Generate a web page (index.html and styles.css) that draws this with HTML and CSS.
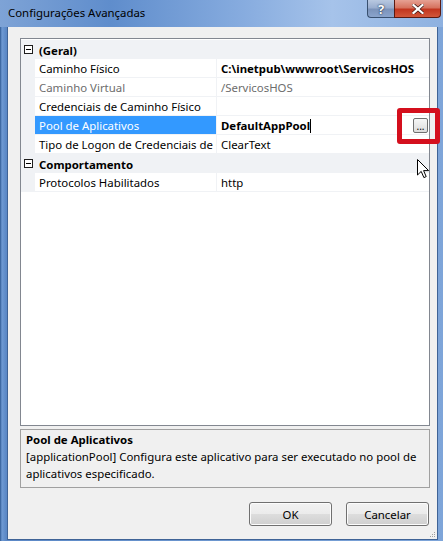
FILE: index.html
```html
<!DOCTYPE html>
<html lang="pt-BR">
<head>
    <meta charset="UTF-8">
    <title>Configurações Avançadas</title>
    <link rel="stylesheet" href="styles.css">
</head>
<body>
    <div class="window">
        <div class="titlebar">
            <span class="title">Configurações Avançadas</span>
            <div class="caption-buttons">
                <div class="cap-btn help">?</div>
                <div class="cap-btn close">
                    <svg width="12" height="10" viewBox="0 0 12 10">
                        <path d="M1.5 1 L10.5 9 M10.5 1 L1.5 9" stroke="#3a1410" stroke-width="3.6" stroke-linecap="square"/>
                        <path d="M1.5 1 L10.5 9 M10.5 1 L1.5 9" stroke="#fff" stroke-width="2.2" stroke-linecap="square"/>
                    </svg>
                </div>
            </div>
        </div>

        <div class="client">
            <div class="grid">
                <div class="row category">
                    <span class="toggle">
                        <svg width="9" height="9" viewBox="0 0 9 9">
                            <rect x="0.5" y="0.5" width="8" height="8" fill="#fff" stroke="#1e1e1e"/>
                            <path d="M2 4.5 H7" stroke="#000"/>
                        </svg>
                    </span>
                    <span class="cat-name">(Geral)</span>
                </div>
                <div class="row">
                    <span class="gutter"></span>
                    <span class="name">Caminho Físico</span>
                    <span class="value bold">C:\inetpub\wwwroot\ServicosHOS</span>
                </div>
                <div class="row readonly">
                    <span class="gutter"></span>
                    <span class="name">Caminho Virtual</span>
                    <span class="value">/ServicosHOS</span>
                </div>
                <div class="row">
                    <span class="gutter"></span>
                    <span class="name">Credenciais de Caminho Físico</span>
                    <span class="value"></span>
                </div>
                <div class="row selected">
                    <span class="gutter"></span>
                    <span class="name">Pool de Aplicativos</span>
                    <span class="value bold">
                        <span class="caret">DefaultAppPool</span>
                        <span class="browse">...</span>
                    </span>
                </div>
                <div class="row">
                    <span class="gutter"></span>
                    <span class="name">Tipo de Logon de Credenciais de Caminho Físico</span>
                    <span class="value">ClearText</span>
                </div>
                <div class="row category">
                    <span class="toggle">
                        <svg width="9" height="9" viewBox="0 0 9 9">
                            <rect x="0.5" y="0.5" width="8" height="8" fill="#fff" stroke="#1e1e1e"/>
                            <path d="M2 4.5 H7" stroke="#000"/>
                        </svg>
                    </span>
                    <span class="cat-name">Comportamento</span>
                </div>
                <div class="row">
                    <span class="gutter"></span>
                    <span class="name">Protocolos Habilitados</span>
                    <span class="value">http</span>
                </div>
            </div>

            <div class="desc">
                <div class="desc-title">Pool de Aplicativos</div>
                <div class="desc-text">[applicationPool] Configura este aplicativo para ser executado no pool de<br>aplicativos especificado.</div>
            </div>

            <div class="actions">
                <button class="btn">OK</button>
                <button class="btn">Cancelar</button>
            </div>

            <svg class="grip" width="7" height="7" viewBox="0 0 7 7">
                <rect x="5" y="1" width="1" height="1" fill="#a0a0a0"/>
                <rect x="3" y="3" width="1" height="1" fill="#a0a0a0"/>
                <rect x="5" y="3" width="1" height="1" fill="#a0a0a0"/>
                <rect x="1" y="5" width="1" height="1" fill="#a0a0a0"/>
                <rect x="3" y="5" width="1" height="1" fill="#a0a0a0"/>
                <rect x="5" y="5" width="1" height="1" fill="#a0a0a0"/>
            </svg>
        </div>

        <!-- marcação em volta do botão de procurar -->
        <div class="highlight"></div>

        <!-- ponteiro do mouse -->
        <svg class="pointer" width="13" height="20" viewBox="0 0 13 20">
            <path d="M0.5 0.5 V16 L4.2 12.4 L6.9 18.6 L9.2 17.6 L6.6 11.6 H11.6 Z" fill="#fff" stroke="#000" stroke-width="1" stroke-linejoin="miter"/>
        </svg>
    </div>
</body>
</html>
```

FILE: styles.css
```css
body {
    margin: 0;
    font-family: "Noto Sans", "Open Sans", sans-serif;
    font-size: 11.4px;
    color: #000;
}
.window {
    position: relative;
    width: 443px;
    height: 541px;
    display: flex;
    flex-direction: column;
    overflow: hidden;
    background: linear-gradient(to right, #2f5a94 0, #6f9ad3 2px, #5b88c6 6px, #6d97cf 50%, #7ea5d9 100%);
}
.titlebar {
    height: 27px;
    display: flex;
    align-items: flex-start;
    background: linear-gradient(to right, #7ea3d6 0, #5f8dcc 25%, #87acdf 55%, #a6c3ea 75%, #8eb1e0 100%);
}
.title {
    padding: 5px 0 0 8px;
    line-height: 16px;
    color: #000;
}
.caption-buttons {
    margin-left: auto;
    margin-right: 2px;
    display: flex;
}
.cap-btn {
    height: 18px;
    box-sizing: border-box;
    display: flex;
    align-items: center;
    justify-content: center;
    border: 1px solid #38506f;
    border-top: none;
}
.cap-btn.help {
    width: 27px;
    border-radius: 0 0 0 4px;
    border-right: none;
    background: linear-gradient(to bottom, #b8c8e0 0, #9aaecf 45%, #7b93ba 55%, #8aa4cc 100%);
    color: #fff;
    font-weight: bold;
    font-size: 13px;
    text-shadow: 0 0 2px #1d2f4a, 0 0 1px #1d2f4a;
}
.cap-btn.close {
    width: 47px;
    border-radius: 0 0 4px 0;
    border-color: #5a1a12;
    background: linear-gradient(to bottom, #e6a193 0, #d6735f 45%, #c2361f 55%, #d2573a 100%);
}
.client {
    position: relative;
    flex: 1;
    display: flex;
    flex-direction: column;
    margin: 0 5px 1px 7px;
    padding: 11px 7px 13px 12px;
    background: #f0f0f0;
    border: 1px solid #3f6396;
    border-top: none;
}
.grid {
    flex: 1;
    box-sizing: border-box;
    padding-top: 1px;
    background: #fff;
    border: 1px solid #828790;
}
.row {
    display: grid;
    grid-template-columns: 14px 182px 1fr;
    height: 19px;
    box-sizing: border-box;
    line-height: 17px;
    white-space: nowrap;
}
.row .gutter {
    background: #f0f2f5;
}
.row .name {
    padding: 1px 0 0 4px;
    overflow: hidden;
    border-right: 1px solid #f0f2f5;
    border-bottom: 1px solid #f0f2f5;
}
.row .value {
    display: flex;
    align-items: center;
    padding: 1px 0 0 4px;
    overflow: hidden;
    border-bottom: 1px solid #f0f2f5;
}
.bold {
    font-weight: bold;
}
.row.readonly .name,
.row.readonly .value {
    color: #6d6d6d;
}
.row.selected .name {
    background: #3399ff;
    color: #fff;
}
.caret {
    border-right: 1px solid #000;
    line-height: 14px;
}
.browse {
    margin: -1px 1px 0 auto;
    width: 15px;
    height: 15px;
    box-sizing: border-box;
    border: 1px solid #707070;
    border-radius: 2px;
    background: linear-gradient(to bottom, #f6f6f6, #dcdcdc);
    font-weight: normal;
    font-size: 10px;
    line-height: 14px;
    text-align: center;
    color: #000;
}
.row.category {
    display: flex;
    align-items: center;
    padding-top: 1px;
    background: #f0f2f5;
}
.toggle {
    display: flex;
    width: 9px;
    margin: -1px 6px 0 3px;
}
.cat-name {
    font-weight: bold;
}
.desc {
    height: 59px;
    box-sizing: border-box;
    margin-top: 3px;
    padding: 1px 5px;
    border: 1px solid #a0a0a0;
    background: #f0f0f0;
    line-height: 17px;
    white-space: nowrap;
}
.desc-title {
    font-weight: bold;
}
.actions {
    display: flex;
    justify-content: flex-end;
    gap: 14px;
    margin-top: 14px;
    margin-right: 1px;
}
.btn {
    width: 83px;
    height: 24px;
    padding: 0;
    font-family: inherit;
    font-size: 11.4px;
    color: #000;
    border: 1px solid #707070;
    border-radius: 3px;
    background: linear-gradient(to bottom, #f2f2f2 0, #ebebeb 50%, #dddddd 51%, #cfcfcf 100%);
    box-shadow: inset 0 0 0 1px #fcfcfc;
}
.grip {
    position: absolute;
    right: 1px;
    bottom: 1px;
}
.highlight {
    position: absolute;
    left: 397px;
    top: 108px;
    width: 43px;
    height: 36px;
    box-sizing: border-box;
    border: 5px solid #d40f1d;
    border-radius: 3px;
}
.pointer {
    position: absolute;
    left: 417px;
    top: 159px;
}
```
